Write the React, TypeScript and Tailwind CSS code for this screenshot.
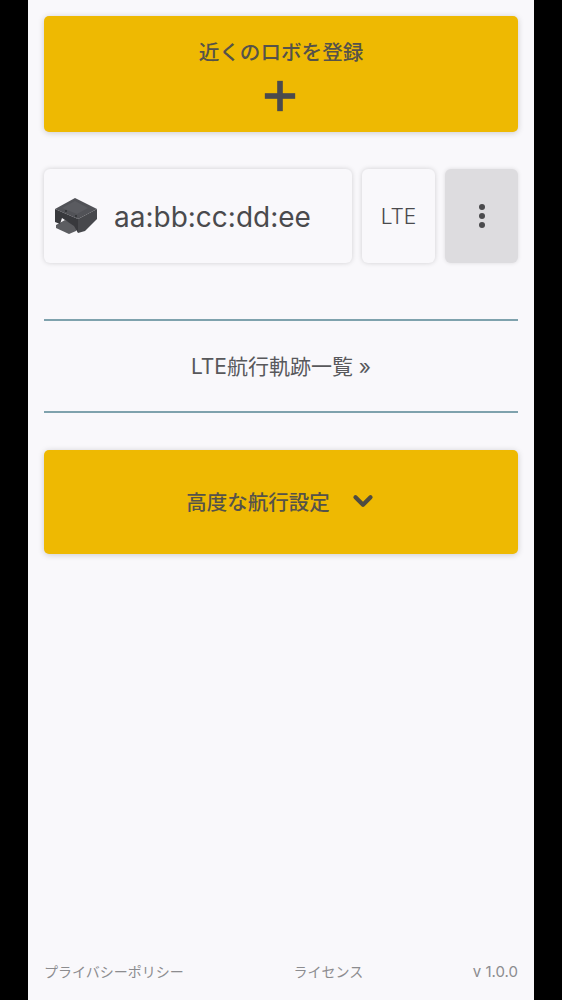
import { ChevronDown, Plus } from 'lucide-react';

const FONT = "font-['Inter','Noto_Sans_CJK_JP',sans-serif]";

function RobotIcon() {
  return (
    <svg viewBox="0 0 44 36" className="w-[44px] h-[36px] shrink-0">
      {/* tray sticking out at the front */}
      <path d="M2 27 L11 22 L25 28 L22 33 L15 36 L2 30 Z" fill="#5c5d61" />
      {/* top */}
      <path d="M1 11 L21 0 L43 11 L24 21 L1 11 Z" fill="#515257" />
      <path d="M8 10 L21 3 L34 10 L23 16 Z" fill="#5a5b60" />
      {/* left side */}
      <path d="M1 11 L24 21 L24 35 L20 28 L8 20 L6 26 L1 24 Z" fill="#38393d" />
      {/* right side */}
      <path d="M24 21 L43 11 L43 21 L31 33 L24 35 Z" fill="#47484c" />
      <circle cx="12" cy="13" r="0.9" fill="#2c2d30" />
      <circle cx="22" cy="18" r="0.9" fill="#2c2d30" />
    </svg>
  );
}

export default function App() {
  return (
    <div className={`h-[1000px] w-[562px] bg-black px-[28px] overflow-hidden ${FONT}`}>
      <div className="h-full bg-[#f9f8fb] px-4 pt-4 pb-[18px] flex flex-col text-[#4a4a4d]">
        {/* Register */}
        <button className="h-[116px] w-full rounded-[5px] bg-[#eeb902] shadow-[0_1px_6px_rgba(0,0,0,0.18)] flex flex-col items-center pt-[23px]">
          <span className="text-[20.6px] leading-[28px] font-medium text-[#55524a]">近くのロボを登録</span>
          <Plus className="w-[52px] h-[52px] mt-[3px] -ml-[3px]" strokeWidth={2.6} strokeLinecap="butt" />
        </button>

        {/* Robot row */}
        <div className="mt-[37px] flex h-[94px] gap-[10px]">
          <div className="w-[308px] rounded-md bg-[#f9f8fb] shadow-[0_0_5px_rgba(0,0,0,0.17)] flex items-center pl-[10px]">
            <RobotIcon />
            <span className="ml-[16px] text-[28px] leading-none pt-[2px]">aa:bb:cc:dd:ee</span>
          </div>
          <div className="w-[73px] rounded-md bg-[#f9f8fb] shadow-[0_0_5px_rgba(0,0,0,0.17)] flex items-center justify-center text-[21px] font-light pt-[2px]">
            LTE
          </div>
          <div className="w-[73px] rounded-md bg-[#dddcdf] shadow-[0_0_4px_rgba(0,0,0,0.12)] flex flex-col items-center justify-center gap-[3px]">
            <span className="w-[6px] h-[6px] rounded-full bg-[#4a4a4d]" />
            <span className="w-[6px] h-[6px] rounded-full bg-[#4a4a4d]" />
            <span className="w-[6px] h-[6px] rounded-full bg-[#4a4a4d]" />
          </div>
        </div>

        {/* LTE history link */}
        <div className="mt-[56px] h-[94px] border-y-2 border-[#7fa2ad] flex items-center justify-center text-[21px] text-[#58585b] pt-[1px]">
          LTE航行軌跡一覧 »
        </div>

        {/* Advanced settings */}
        <button className="mt-[37px] h-[104px] w-full rounded-[5px] bg-[#eeb902] shadow-[0_1px_6px_rgba(0,0,0,0.18)] flex items-center justify-center pl-[2px]">
          <span className="text-[20.5px] font-medium text-[#55524a] pt-[3px]">高度な航行設定</span>
          <ChevronDown className="w-[30px] h-[30px] ml-[18px] -mt-[2px] text-[#4f4c42]" strokeWidth={3.4} />
        </button>

        {/* Footer */}
        <div className="mt-auto flex items-center justify-between text-[14px] leading-[20px] text-[#8c8c8f]">
          <span>プライバシーポリシー</span>
          <span>ライセンス</span>
          <span className="text-[15px]">v 1.0.0</span>
        </div>
      </div>
    </div>
  );
}
